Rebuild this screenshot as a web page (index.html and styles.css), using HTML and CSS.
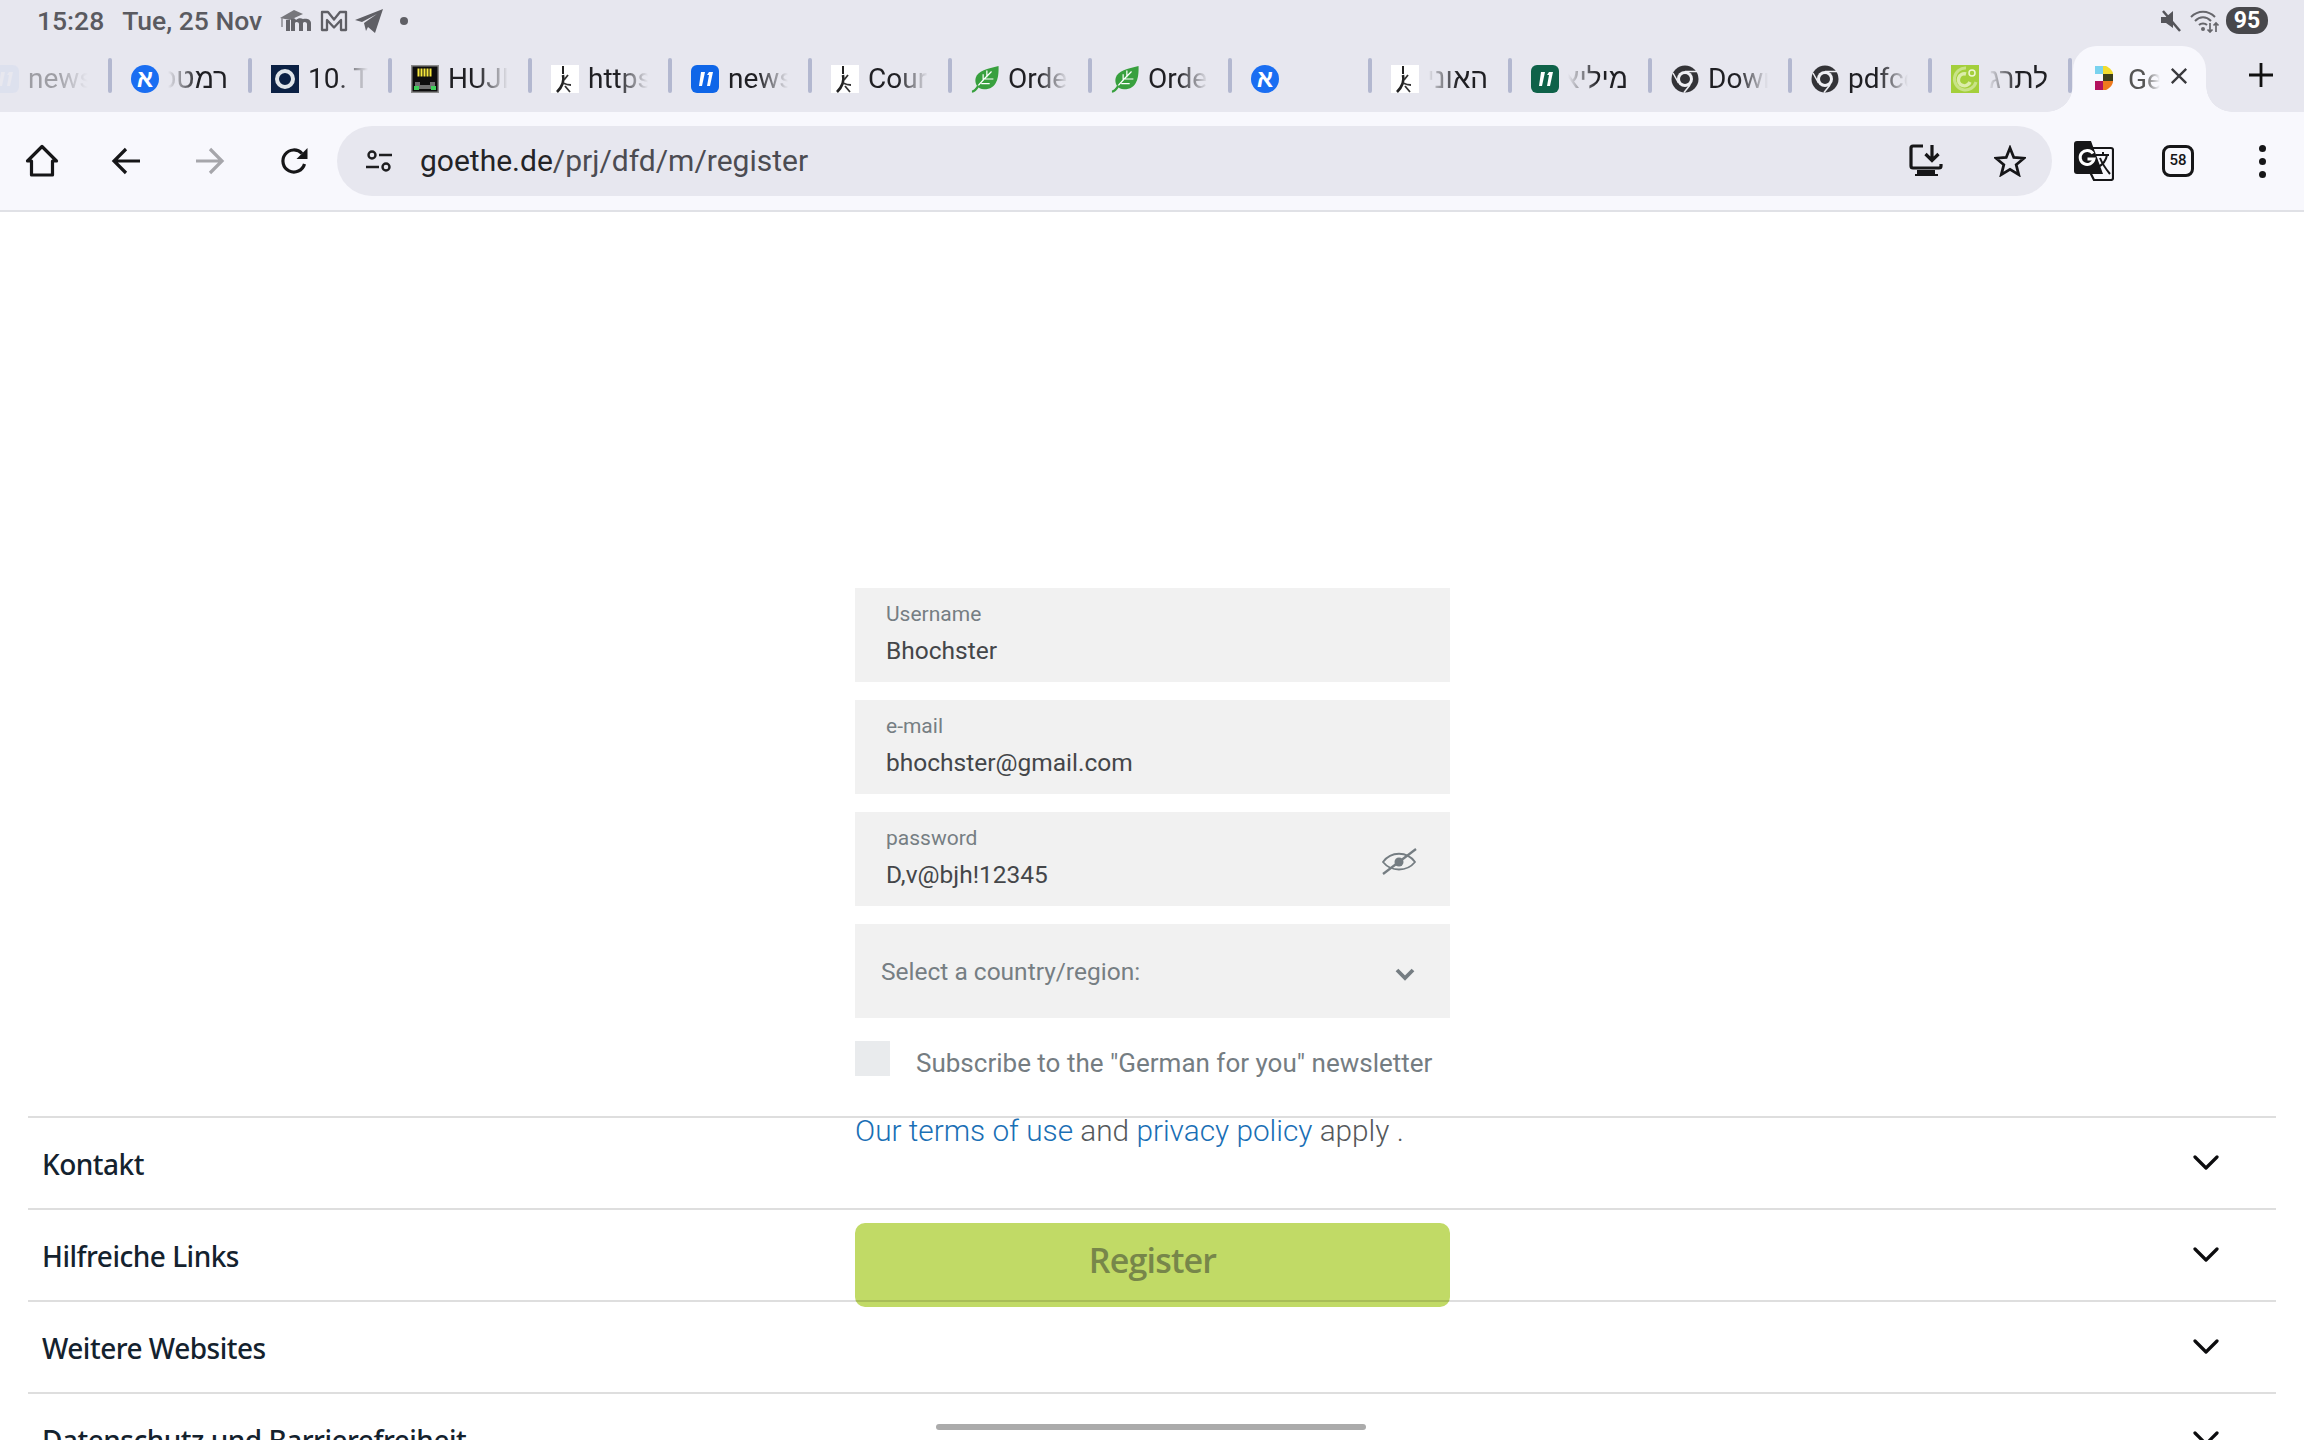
FILE: index.html
```html
<!DOCTYPE html>
<html lang="en">
<head>
<meta charset="utf-8">
<title>Goethe register</title>
<link rel="stylesheet" href="styles.css">
</head>
<body>
<svg class="defs" width="0" height="0" aria-hidden="true">
  <defs>
    <symbol id="fav-aleph" viewBox="0 0 28 28">
      <circle cx="14" cy="14" r="14" fill="#1a6ef2"/>
      <text x="14" y="22" class="aleph-glyph" text-anchor="middle">א</text>
    </symbol>
    <symbol id="fav-ring" viewBox="0 0 28 28">
      <rect width="28" height="28" fill="#0b2144"/>
      <circle cx="14" cy="14" r="8" fill="none" stroke="#dfe5ea" stroke-width="4"/>
    </symbol>
    <symbol id="fav-net" viewBox="0 0 28 28">
      <rect width="28" height="28" fill="#8a8a8a"/>
      <rect x="1.500" y="1.500" width="25" height="25" fill="#0d0d0d"/>
      <path d="M7.500 3.500v8M10.500 3.500v8M13.500 3.500v8M16.500 3.500v8M19.500 3.500v8" stroke="#f7e83c" stroke-width="2"/>
      <rect x="4" y="17" width="20" height="7" fill="#6f6f6f"/>
      <rect x="9" y="17" width="10" height="3" fill="#0d0d0d"/>
      <rect x="3" y="21" width="5" height="4" fill="#3fd05a"/>
      <rect x="20" y="21" width="5" height="4" fill="#3fd05a"/>
    </symbol>
    <symbol id="fav-pdf" viewBox="0 0 28 28">
      <rect width="28" height="28" fill="#fff"/>
      <path d="M12 1v8" stroke="#222" stroke-width="2" fill="none"/>
      <path d="M12 10c1.500 6-1 12-6 17" stroke="#222" stroke-width="2.600" fill="none"/>
      <path d="M12 18c2 1 5 2 8 2M13 15l4-5M14 21l5 6" stroke="#333" stroke-width="1.800" fill="none"/>
    </symbol>
    <symbol id="fav-blue" viewBox="0 0 28 28">
      <rect width="28" height="28" rx="6" fill="#0f66e8"/>
      <path d="M10 7h4l-3 14H8zM18 7h4l-3 14h-3l2-11h-2z" fill="#fff"/>
    </symbol>
    <symbol id="fav-green" viewBox="0 0 28 28">
      <rect width="28" height="28" rx="6" fill="#0f6249"/>
      <path d="M10 7h4l-3 14H8zM18 7h4l-3 14h-3l2-11h-2z" fill="#fff"/>
    </symbol>
    <symbol id="fav-leaf" viewBox="0 0 30 28">
      <path d="M29.500 0C30 12 28 25 14 25C7 25 3.500 19 5 13C7 5 18 3 29.500 0Z" fill="#38a03e"/>
      <path d="M7 22C11 17 16 12 22 6M13 16V9M17 12V5M11 19H20M15 14H24" stroke="#fff" stroke-width="1.300" fill="none"/>
      <path d="M1 27.500C3.500 27.500 5.500 25.500 8 21" stroke="#38a03e" stroke-width="2.500" fill="none"/>
    </symbol>
    <symbol id="fav-chrome" viewBox="0 0 28 28">
      <circle cx="14" cy="14" r="13.500" fill="#333337"/>
      <circle cx="14" cy="14" r="8" fill="#efeff3"/>
      <circle cx="14" cy="14" r="5" fill="#333337"/>
      <path d="M14 6.500H26M7.500 18L2 8M19 20L13 27.500" stroke="#efeff3" stroke-width="1.500"/>
    </symbol>
    <symbol id="fav-goethe" viewBox="0 0 28 28">
      <rect width="28" height="28" fill="#a4cf3b"/>
      <path d="M15 3A11 11 0 1 0 25 17" fill="none" stroke="#c9e388" stroke-width="3"/>
      <path d="M15 9A6 6 0 1 0 19 17" fill="none" stroke="#dcedaa" stroke-width="3.500"/>
      <circle cx="21" cy="8" r="3" fill="none" stroke="#eef6d2" stroke-width="1.500"/>
    </symbol>
    <symbol id="chev" viewBox="0 0 26 16">
      <path d="M2 2L13 13L24 2" fill="none" stroke="#0c0c0e" stroke-width="3.200" stroke-linecap="round" stroke-linejoin="round"/>
    </symbol>
  </defs>
</svg>

<header class="status">
  <span class="status-text">15:28</span>
  <span class="status-text date">Tue, 25 Nov</span>
  <svg class="st-moodle" viewBox="0 0 32 22"><path d="M0 8L14 0L23 4L10 10Z" fill="#77777c"/><path d="M2 8V17" stroke="#8a8a90" stroke-width="1.500"/><path d="M6 10H10V21H6ZM11 9C13 8 15 8 16 10C18 8 21 8 23 9C26 8 31 9 31 13V21H27V14C27 12 24 11 23 13V21H19V14C19 12 16 11 15 13V21H11Z" fill="#65656b"/></svg>
  <svg class="st-m" viewBox="0 0 28 22"><path d="M2 2H8L14 9.500L20 2H26V20H21V10L14 17.500L7 10V20H2Z" fill="none" stroke="#5f5f65" stroke-width="2.300" stroke-linejoin="round"/></svg>
  <svg class="st-tg" viewBox="0 0 28 24"><path d="M28 0L20 24L13 18L11 22L9 14L22 5L7 13L0 11Z" fill="#5f5f65"/></svg>
  <span class="st-dot"></span>
  <span class="spacer"></span>
  <svg class="st-mute" viewBox="0 0 22 24"><path d="M1 8H6L13 2V19L6 14H1Z" fill="#55555a"/><path d="M3 2L20 22" stroke="#55555a" stroke-width="2.500"/></svg>
  <svg class="st-wifi" viewBox="0 0 30 24"><path d="M1 8C8 1 18 1 25 8M5 12C10 7 16 7 21 12M9 16C11 14 15 14 17 16" fill="none" stroke="#66666b" stroke-width="2"/><circle cx="13" cy="20" r="2" fill="#66666b"/><path d="M20 14V23M17.500 20.500L20 23L22.500 20.500M26 23V14M23.500 16.500L26 14L28.500 16.500" fill="none" stroke="#66666b" stroke-width="1.700"/></svg>
  <span class="battery">95</span>
</header>

<nav class="tabs">
  <div class="tab tab-first"><svg class="fav"><use href="#fav-blue"/></svg><span class="tab-label">news</span><i class="sep"></i></div>
  <div class="tab"><svg class="fav"><use href="#fav-aleph"/></svg><span class="tab-label rtl" dir="rtl">רמטכ"ל</span><i class="sep"></i></div>
  <div class="tab"><svg class="fav"><use href="#fav-ring"/></svg><span class="tab-label">10. Tage</span><i class="sep"></i></div>
  <div class="tab"><svg class="fav"><use href="#fav-net"/></svg><span class="tab-label">HUJI</span><i class="sep"></i></div>
  <div class="tab"><svg class="fav"><use href="#fav-pdf"/></svg><span class="tab-label">https</span><i class="sep"></i></div>
  <div class="tab"><svg class="fav"><use href="#fav-blue"/></svg><span class="tab-label">news</span><i class="sep"></i></div>
  <div class="tab"><svg class="fav"><use href="#fav-pdf"/></svg><span class="tab-label">Cour</span><i class="sep"></i></div>
  <div class="tab"><svg class="fav"><use href="#fav-leaf"/></svg><span class="tab-label">Orde</span><i class="sep"></i></div>
  <div class="tab"><svg class="fav"><use href="#fav-leaf"/></svg><span class="tab-label">Orde</span><i class="sep"></i></div>
  <div class="tab"><svg class="fav"><use href="#fav-aleph"/></svg><span class="tab-label"></span><i class="sep"></i></div>
  <div class="tab"><svg class="fav"><use href="#fav-pdf"/></svg><span class="tab-label rtl" dir="rtl">האוני</span><i class="sep"></i></div>
  <div class="tab"><svg class="fav"><use href="#fav-green"/></svg><span class="tab-label rtl" dir="rtl">מיליא</span><i class="sep"></i></div>
  <div class="tab"><svg class="fav"><use href="#fav-chrome"/></svg><span class="tab-label">Down</span><i class="sep"></i></div>
  <div class="tab"><svg class="fav"><use href="#fav-chrome"/></svg><span class="tab-label">pdfco</span><i class="sep"></i></div>
  <div class="tab"><svg class="fav"><use href="#fav-goethe"/></svg><span class="tab-label rtl" dir="rtl">לתרג</span><i class="sep"></i></div>
  <div class="tab-active">
    <svg class="fav-dfd" viewBox="0 0 18 24">
      <path d="M0 0H8V8H0Z" fill="#79d2ee"/><path d="M8 0H11C15 2 18 5 18 8H8Z" fill="#f2dc2e"/>
      <path d="M8 8H18V15H8Z" fill="#3c3f1c"/><path d="M8 15H18C18 19 15 22 11 24H8Z" fill="#ee7a1e"/>
      <path d="M0 15H8V24H0Z" fill="#b3125e"/>
    </svg>
    <span class="tab-label active-label">Ge</span>
    <svg class="tab-x" viewBox="0 0 20 20"><path d="M2 2L18 18M18 2L2 18" stroke="#3a3a3e" stroke-width="2.600"/></svg>
  </div>
  <div class="tab-plus"><svg viewBox="0 0 24 24"><path d="M12 0V24M0 12H24" stroke="#111" stroke-width="2.800"/></svg></div>
</nav>

<div class="toolbar">
  <button class="tool"><svg class="ic-home" viewBox="0 0 34 34"><path d="M17 2.500L31.500 17H27.500V31H6.500V17H2.500Z" fill="none" stroke="#161618" stroke-width="3.200" stroke-linejoin="round"/></svg></button>
  <button class="tool"><svg class="ic-arrow" viewBox="0 0 30 28"><path d="M15 2L3 14L15 26M3 14H29" fill="none" stroke="#161618" stroke-width="3.200"/></svg></button>
  <button class="tool"><svg class="ic-arrow" viewBox="0 0 30 28"><path d="M15 2L27 14L15 26M27 14H1" fill="none" stroke="#a6a6ab" stroke-width="3.200"/></svg></button>
  <button class="tool"><svg class="ic-arrow" viewBox="0 0 30 28"><path d="M25.500 17A11 11 0 1 1 23 6.500" fill="none" stroke="#161618" stroke-width="3.200"/><path d="M28.500 1V12H17.500Z" fill="#161618"/></svg></button>
  <div class="omnibox">
    <button class="omni-btn tune"><svg class="ic-tune" viewBox="0 0 26 22"><circle cx="6" cy="5" r="3.500" fill="none" stroke="#1e1e20" stroke-width="2.400"/><path d="M13 5H26M0 17H13" stroke="#1e1e20" stroke-width="2.400"/><circle cx="20" cy="17" r="3.500" fill="none" stroke="#1e1e20" stroke-width="2.400"/></svg></button>
    <div class="url"><span class="url-host">goethe.de</span>/prj/dfd/m/register</div>
    <button class="omni-btn"><svg class="ic-dl" viewBox="0 0 34 34"><path d="M14 2H4Q2 2 2 4V22Q2 24 4 24H30Q32 24 32 22V20" fill="none" stroke="#161618" stroke-width="3.200"/><path d="M23 1V16M16.500 10L23 16.500L29.500 10" fill="none" stroke="#161618" stroke-width="3.200"/><path d="M8 26H26V30H29V32H6V30H8Z" fill="#161618"/></svg></button>
    <button class="omni-btn"><svg class="ic-star" viewBox="0 0 32 32"><path d="M16 3L19.800 12.400L30 13.200L22.200 19.800L24.700 29.600L16 24.300L7.300 29.600L9.800 19.800L2 13.200L12.200 12.400Z" fill="none" stroke="#161618" stroke-width="2.800" stroke-linejoin="miter"/></svg></button>
  </div>
  <button class="tool"><svg class="ic-tr" viewBox="0 0 40 40">
    <path d="M17 7H37Q39 7 39 9V37Q39 39 37 39H20L17 33Z" fill="#f8f8fd" stroke="#161618" stroke-width="2.200"/>
    <path d="M3 0H17L29 33H3Q0 33 0 30V3Q0 0 3 0Z" fill="#161618"/>
    <path d="M19 12.500A7 7 0 1 0 20 18H13.500" fill="none" stroke="#fff" stroke-width="3"/>
    <path d="M22 14H35M29 11V14M33 14C32 20 28 24 24 26M26 17C28 22 31 27 36 33" fill="none" stroke="#161618" stroke-width="2"/>
  </svg></button>
  <button class="tool"><span class="tabcount">58</span></button>
  <button class="tool"><span class="kebab"><i></i><i></i><i></i></span></button>
</div>

<main class="page">
  <form class="form">
    <div class="field">
      <div class="field-text"><div class="field-label">Username</div><div class="field-value">Bhochster</div></div>
    </div>
    <div class="field">
      <div class="field-text"><div class="field-label">e-mail</div><div class="field-value">bhochster@gmail.com</div></div>
    </div>
    <div class="field">
      <div class="field-text"><div class="field-label">password</div><div class="field-value">D,v@bjh!12345</div></div>
      <svg class="ic-eye" viewBox="0 0 36 30"><path d="M2 15C10 4 26 4 34 15C26 25 10 25 2 15Z" fill="none" stroke="#757d82" stroke-width="1.800"/><circle cx="18" cy="15" r="4.500" fill="#757d82"/><path d="M2 27L35 2" stroke="#757d82" stroke-width="2.200"/></svg>
    </div>
    <div class="select">
      <span class="select-text">Select a country/region:</span>
      <svg class="ic-selchev" viewBox="0 0 20 14"><path d="M2 3L10 11L18 3" fill="none" stroke="#757d82" stroke-width="3.800"/></svg>
    </div>
    <div class="check-row">
      <span class="checkbox"></span>
      <span class="check-text">Subscribe to the "German for you" newsletter</span>
    </div>
    <p class="terms"><a class="link">Our terms of use</a> and <a class="link">privacy policy</a> apply .</p>
    <button class="register" type="button">Register</button>
  </form>
  <footer class="footer">
    <div class="foot-row"><span>Kontakt</span><svg class="foot-chev"><use href="#chev"/></svg></div>
    <div class="foot-row"><span>Hilfreiche Links</span><svg class="foot-chev"><use href="#chev"/></svg></div>
    <div class="foot-row"><span>Weitere Websites</span><svg class="foot-chev"><use href="#chev"/></svg></div>
    <div class="foot-row"><span>Datenschutz und Barrierefreiheit</span><svg class="foot-chev"><use href="#chev"/></svg></div>
  </footer>
  <div class="home-bar"></div>
</main>
</body>
</html>
```

FILE: styles.css
```css
* { box-sizing: border-box; }

html, body {
  margin: 0;
  height: 1440px;
  overflow: hidden;
  background: #fff;
  font-family: Roboto, "Liberation Sans", sans-serif;
}

body {
  display: flex;
  flex-direction: column;
  width: 2304px;
}

button {
  border: 0;
  background: none;
  padding: 0;
  font: inherit;
}

.defs { position: absolute; }

.aleph-glyph {
  font-family: "Liberation Sans", sans-serif;
  font-size: 24px;
  font-weight: 700;
  fill: #fff;
}

/* status bar */
.status {
  height: 46px;
  flex: none;
  background: #e7e7ef;
  display: flex;
  align-items: center;
  padding: 0 36px 5px 37px;
}
.status-text {
  font-size: 26.500px;
  font-weight: 500;
  color: #5a5a60;
}
.date { margin-left: 18px; }
.spacer { flex: 1; }
.st-moodle { width: 32px; height: 22px; margin-left: 18px; }
.st-m { width: 28px; height: 22px; margin-left: 8px; }
.st-tg { width: 28px; height: 24px; margin-left: 7px; }
.st-dot {
  width: 8px;
  height: 8px;
  border-radius: 50%;
  background: #5f5f65;
  margin-left: 17px;
}
.st-mute { width: 22px; height: 24px; }
.st-wifi { width: 30px; height: 24px; margin-left: 8px; }
.battery {
  width: 42px;
  height: 27px;
  margin-left: 6px;
  border-radius: 13px;
  background: #48484c;
  color: #fff;
  font-size: 23px;
  font-weight: 700;
  line-height: 27px;
  text-align: center;
}

/* tab strip */
.tabs {
  height: 66px;
  flex: none;
  background: #e7e7ef;
  display: flex;
  overflow: hidden;
  position: relative;
}
.tab {
  width: 140px;
  flex: none;
  height: 66px;
  display: flex;
  align-items: flex-start;
  padding: 19px 0 0 19px;
}
.tab-first { margin-left: -28px; }
.tab-first .tab-label { opacity: .36; }
.tab-first .fav { opacity: .04; }
.fav {
  width: 28px;
  height: 28px;
  flex: none;
}
.tab-label {
  width: 60px;
  margin-left: 9px;
  font-size: 28px;
  line-height: 28px;
  white-space: nowrap;
  overflow: hidden;
  color: #1f1f23;
  font-family: Roboto, "Liberation Sans", sans-serif;
  -webkit-mask-image: linear-gradient(to right, #000 50%, transparent 100%);
  mask-image: linear-gradient(to right, #000 50%, transparent 100%);
}
.rtl {
  -webkit-mask-image: linear-gradient(to left, #000 50%, transparent 100%);
  mask-image: linear-gradient(to left, #000 50%, transparent 100%);
}
.sep {
  width: 4px;
  height: 35px;
  margin-top: -7px;
  margin-left: auto;
  border-radius: 2px;
  background: #b3b8d0;
  flex: none;
}
.tab-active {
  width: 133px;
  flex: none;
  margin-left: 1px;
  height: 66px;
  background: #f8f8fd;
  border-radius: 24px 24px 0 0;
  display: flex;
  align-items: flex-start;
  padding: 20px 0 0 22px;
  position: relative;
}
.tab-active::before,
.tab-active::after {
  content: "";
  position: absolute;
  bottom: 0;
  width: 26px;
  height: 26px;
}
.tab-active::before {
  left: -26px;
  background: radial-gradient(circle at 0 0, transparent 25.500px, #f8f8fd 26px);
}
.tab-active::after {
  right: -26px;
  background: radial-gradient(circle at 100% 0, transparent 25.500px, #f8f8fd 26px);
}
.fav-dfd { width: 18px; height: 24px; flex: none; }
.active-label {
  width: 32px;
  margin-left: 15px;
  color: #555;
}
.tab-x {
  width: 18px;
  height: 18px;
  margin: 1px 0 0 10px;
  flex: none;
}
.tab-plus {
  width: 110px;
  flex: none;
  display: flex;
  justify-content: center;
  padding-top: 17px;
}
.tab-plus svg { width: 24px; height: 24px; }

/* toolbar */
.toolbar {
  height: 100px;
  flex: none;
  background: #f8f8fd;
  border-bottom: 2px solid #e0e1e6;
  display: flex;
  align-items: flex-start;
  padding-top: 14px;
}
.tool {
  width: 84px;
  height: 70px;
  flex: none;
  display: flex;
  align-items: center;
  justify-content: center;
}
.omnibox {
  flex: 1;
  height: 70px;
  margin-left: 1px;
  border-radius: 35px;
  background: #e7e7ef;
  display: flex;
  align-items: center;
}
.omni-btn {
  width: 84px;
  height: 70px;
  flex: none;
  display: flex;
  align-items: center;
  justify-content: center;
}
.tune { width: 83px; }
.url {
  flex: 1;
  font-size: 30px;
  line-height: 40px;
  color: #4c4c52;
}
.url-host { color: #232326; }

.ic-home { width: 34px; height: 34px; }
.ic-arrow { width: 30px; height: 28px; }
.ic-tune { width: 26px; height: 22px; }
.ic-dl { width: 34px; height: 34px; }
.ic-star { width: 32px; height: 32px; }
.ic-tr { width: 40px; height: 40px; }
.tabcount {
  width: 32px;
  height: 32px;
  border: 3.500px solid #161618;
  border-radius: 8px;
  font-size: 15px;
  font-weight: 500;
  line-height: 25px;
  text-align: center;
  color: #161618;
}
.kebab {
  display: flex;
  flex-direction: column;
  gap: 6px;
}
.kebab i {
  display: block;
  width: 7px;
  height: 7px;
  border-radius: 50%;
  background: #161618;
}

/* page */
.page {
  flex: 1;
  display: grid;
  grid-template: 1fr / 1fr;
  overflow: hidden;
  position: relative;
  background: #fff;
}
.form {
  grid-area: 1 / 1;
  width: 595px;
  margin: 376px 0 0 855px;
  display: flex;
  flex-direction: column;
  align-self: start;
}
.field {
  height: 94px;
  margin-bottom: 18px;
  background: #f1f1f1;
  display: flex;
  justify-content: space-between;
  align-items: flex-start;
  padding: 14px 33px 0 31px;
}
.field-label {
  font-size: 21px;
  line-height: 24px;
  color: #767e83;
}
.field-value {
  margin-top: 9px;
  font-size: 24.500px;
  line-height: 32px;
  color: #444649;
}
.ic-eye {
  width: 36px;
  height: 30px;
  margin-top: 21px;
}
.select {
  height: 94px;
  background: #f1f1f1;
  display: flex;
  justify-content: space-between;
  align-items: center;
  padding: 0 35px 0 26px;
}
.select-text {
  font-size: 24.500px;
  color: #767e83;
}
.ic-selchev {
  width: 20px;
  height: 14px;
  margin-top: 6px;
}
.check-row {
  margin-top: 23px;
  display: flex;
  align-items: flex-start;
}
.checkbox {
  width: 35px;
  height: 35px;
  background: #e9ebed;
  flex: none;
}
.check-text {
  margin-left: 26px;
  font-size: 26px;
  line-height: 34px;
  margin-top: 5px;
  color: #757d82;
  white-space: nowrap;
}
.terms {
  margin: 31px 0 0;
  font-size: 29.750px;
  font-weight: 300;
  line-height: 40px;
  color: #55595c;
  white-space: nowrap;
}
.link { color: #1a6fb5; }
.register {
  margin-top: 72px;
  height: 84px;
  border-radius: 10px;
  background: #c1da66;
  color: #77864a;
  font-family: "Open Sans", sans-serif;
  font-size: 34px;
  font-weight: 600;
  letter-spacing: -.8px;
  padding-bottom: 10px;
}
.footer {
  grid-area: 1 / 1;
  margin: 904px 28px 0;
  align-self: start;
  position: relative;
}
.foot-row {
  height: 92px;
  border-top: 2px solid rgba(0, 0, 0, .13);
  display: flex;
  justify-content: space-between;
  align-items: center;
  padding: 2px 57px 0 14px;
  font-family: "Noto Sans", sans-serif;
  font-size: 28px;
  font-weight: 500;
  letter-spacing: -.5px;
  color: #14222e;
}
.foot-chev {
  width: 26px;
  height: 16px;
  margin-bottom: 2px;
}
.home-bar {
  position: absolute;
  left: 936px;
  bottom: 10px;
  width: 430px;
  height: 6px;
  border-radius: 3px;
  background: #ababab;
}
```
